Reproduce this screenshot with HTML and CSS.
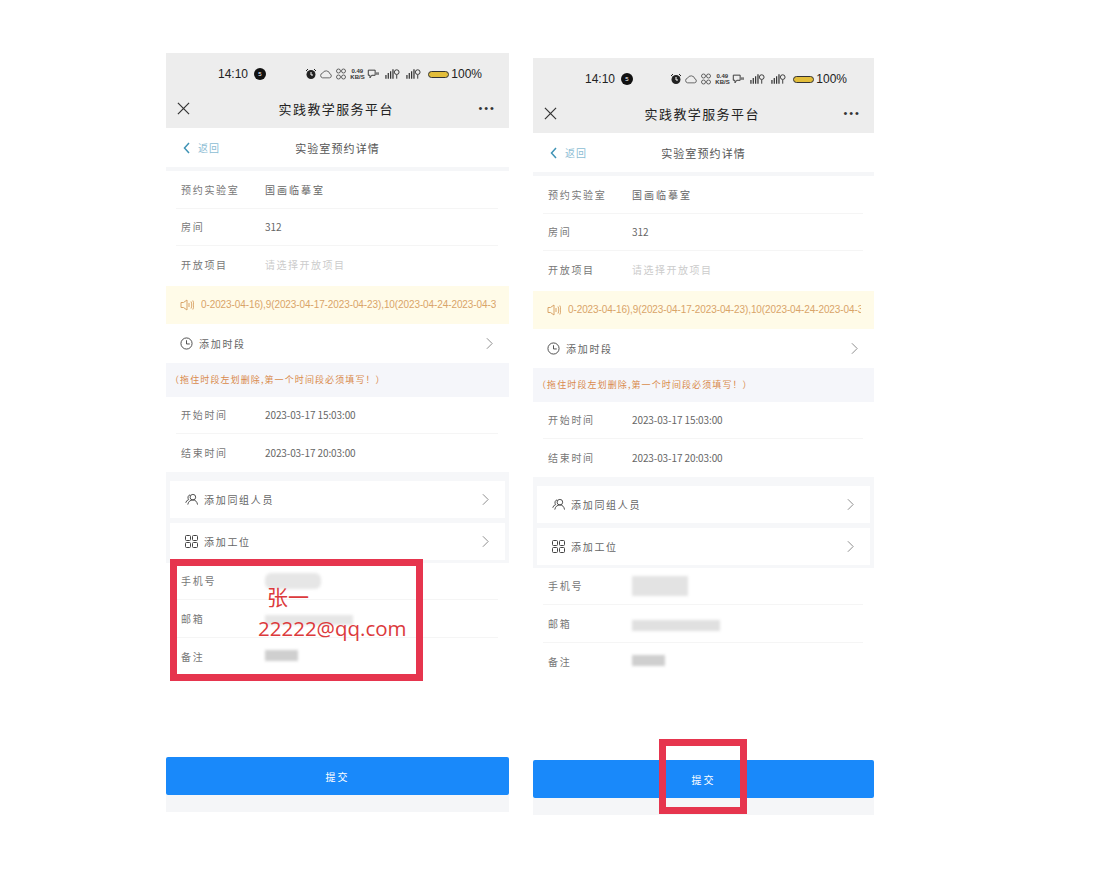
FILE: index.html
```html
<!DOCTYPE html>
<html lang="zh-CN">
<head>
  <meta charset="UTF-8" />
  <meta name="viewport" content="width=device-width, initial-scale=1.0" />
  <title>实验室预约详情</title>
  <link rel="stylesheet" href="styles.css">
</head>
<body>
  <svg class="defs" width="0" height="0" aria-hidden="true">
    <symbol id="i-alarm" viewBox="0 0 12 12"><path d="M1 3 3 1M11 3 9 1" stroke="#222" fill="none"/><circle cx="6" cy="6.5" r="4.5" fill="#222"/><path d="M6 4v3h2" stroke="#fff" fill="none"/></symbol>
    <symbol id="i-cloud" viewBox="0 0 14 12"><path d="M3 10.5h8a2.4 2.4 0 0 0 .5-4.7A4.5 4.5 0 0 0 3 5a2.8 2.8 0 0 0 0 5.500z" fill="none" stroke="#444" stroke-width=".9"/></symbol>
    <symbol id="i-hub" viewBox="0 0 12 12"><g fill="none" stroke="#555" stroke-width=".9"><circle cx="3.500" cy="3" r="2"/><circle cx="8.500" cy="3" r="2"/><circle cx="3.500" cy="9" r="2"/><circle cx="8.500" cy="9" r="2"/></g></symbol>
    <symbol id="i-wifi" viewBox="0 0 14 12"><path d="M1.500 1.500h8v6h-4l-2 3v-3h-2zM11.500 4v3M13 4v3" fill="none" stroke="#333" stroke-width="1.100"/></symbol>
    <symbol id="i-signal" viewBox="0 0 16 12"><path d="M1 11V7M3.500 11V5M6 11V3M8.500 11V1" stroke="#333" stroke-width="1.300"/><circle cx="12.500" cy="4" r="2.500" fill="none" stroke="#333"/><path d="M12.500 7v4" stroke="#333"/></symbol>
    <symbol id="i-close" viewBox="0 0 14 14"><path d="M1 1 13 13M13 1 1 13" stroke="#333" stroke-width="1.300" fill="none"/></symbol>
    <symbol id="i-back" viewBox="0 0 7 12"><path d="M6 1 1.500 6 6 11" stroke="#3f93b5" stroke-width="1.500" fill="none"/></symbol>
    <symbol id="i-next" viewBox="0 0 8 14"><path d="M1 1 7 7 1 13" stroke="#8a8a8a" stroke-width="1.100" fill="none"/></symbol>
    <symbol id="i-sound" viewBox="0 0 14 12"><path d="M1 3.500h2.500L7 1v10L3.500 8.500H1zM9 4v4M11 2.500c1 2 1 5 0 7M12.800 1.500c1.300 2.500 1.300 6.500 0 9" fill="none" stroke="#d9a468"/></symbol>
    <symbol id="i-clock" viewBox="0 0 14 14"><circle cx="7" cy="7" r="6" fill="none" stroke="#444"/><path d="M7 3.500V7.500H10.500" fill="none" stroke="#444"/></symbol>
    <symbol id="i-group" viewBox="0 0 14 13"><g fill="none" stroke="#444"><circle cx="8.500" cy="4" r="3"/><path d="M3 12c.5-3 2.500-5 5.500-5s4.500 2 5 5M5.500 1.500A3 3 0 0 0 4 6.500 5 5 0 0 0 .8 10"/></g></symbol>
    <symbol id="i-grid" viewBox="0 0 13 13"><g fill="none" stroke="#444"><rect x=".5" y=".5" width="5" height="5" rx="1"/><rect x="7.500" y=".5" width="5" height="5" rx="1"/><rect x=".5" y="7.500" width="5" height="5" rx="1"/><rect x="7.500" y="7.500" width="5" height="5" rx="1"/></g></symbol>
  </svg>

  <div class="screens">
    <!-- 左图 -->
    <div class="phone phone-left">
      <div class="top">
        <div class="status">
          <span class="time">14:10</span><span class="dot">5</span>
          <span class="status-icons">
            <svg class="ic-s"><use href="#i-alarm"/></svg>
            <svg class="ic-s"><use href="#i-cloud"/></svg>
            <svg class="ic-s"><use href="#i-hub"/></svg>
            <span class="speed">0.49<br>KB/S</span>
            <svg class="ic-s"><use href="#i-wifi"/></svg>
            <svg class="ic-m"><use href="#i-signal"/></svg>
            <svg class="ic-m"><use href="#i-signal"/></svg>
            <span class="battery"></span>
            <span class="percent">100%</span>
          </span>
        </div>
        <div class="nav">
          <svg class="nav-close"><use href="#i-close"/></svg>
          <span class="nav-title">实践教学服务平台</span>
          <span class="nav-more">•••</span>
        </div>
      </div>
      <div class="sub">
        <span class="back"><svg class="back-ic"><use href="#i-back"/></svg>返回</span>
        <span class="sub-title">实验室预约详情</span>
      </div>
      <div class="group group-top">
        <div class="row"><span class="label">预约实验室</span><span class="value value-cn">国画临摹室</span></div>
        <div class="row"><span class="label">房间</span><span class="value">312</span></div>
        <div class="row"><span class="label">开放项目</span><span class="value muted">请选择开放项目</span></div>
      </div>
      <div class="notice"><svg class="ic-sound"><use href="#i-sound"/></svg><span class="notice-text">0-2023-04-16),9(2023-04-17-2023-04-23),10(2023-04-24-2023-04-3</span></div>
      <div class="link"><svg class="ic-l"><use href="#i-clock"/></svg><span class="link-text">添加时段</span><svg class="next"><use href="#i-next"/></svg></div>
      <div class="hint">（拖住时段左划删除,第一个时间段必须填写！）</div>
      <div class="group">
        <div class="row"><span class="label">开始时间</span><span class="value">2023-03-17 15:03:00</span></div>
        <div class="row"><span class="label">结束时间</span><span class="value">2023-03-17 20:03:00</span></div>
      </div>
      <div class="cards">
        <div class="card"><svg class="ic-l"><use href="#i-group"/></svg><span class="link-text">添加同组人员</span><svg class="next"><use href="#i-next"/></svg></div>
        <div class="card"><svg class="ic-l"><use href="#i-grid"/></svg><span class="link-text">添加工位</span><svg class="next"><use href="#i-next"/></svg></div>
      </div>
      <div class="group">
        <div class="row"><span class="label">手机号</span><span class="smear smear-phone-l"></span></div>
        <div class="row"><span class="label">邮箱</span><span class="smear smear-mail-l"></span></div>
        <div class="row"><span class="label">备注</span><span class="smear smear-note"></span></div>
      </div>
      <button class="submit">提交</button>
      <div class="foot"></div>
      <div class="mark mark-form">
        <span class="mark-name">张一</span>
        <span class="mark-mail">22222@qq.com</span>
      </div>
    </div>

    <!-- 右图 -->
    <div class="phone phone-right">
      <div class="top">
        <div class="status">
          <span class="time">14:10</span><span class="dot">5</span>
          <span class="status-icons">
            <svg class="ic-s"><use href="#i-alarm"/></svg>
            <svg class="ic-s"><use href="#i-cloud"/></svg>
            <svg class="ic-s"><use href="#i-hub"/></svg>
            <span class="speed">0.49<br>KB/S</span>
            <svg class="ic-s"><use href="#i-wifi"/></svg>
            <svg class="ic-m"><use href="#i-signal"/></svg>
            <svg class="ic-m"><use href="#i-signal"/></svg>
            <span class="battery"></span>
            <span class="percent">100%</span>
          </span>
        </div>
        <div class="nav">
          <svg class="nav-close"><use href="#i-close"/></svg>
          <span class="nav-title">实践教学服务平台</span>
          <span class="nav-more">•••</span>
        </div>
      </div>
      <div class="sub">
        <span class="back"><svg class="back-ic"><use href="#i-back"/></svg>返回</span>
        <span class="sub-title">实验室预约详情</span>
      </div>
      <div class="group group-top">
        <div class="row"><span class="label">预约实验室</span><span class="value value-cn">国画临摹室</span></div>
        <div class="row"><span class="label">房间</span><span class="value">312</span></div>
        <div class="row"><span class="label">开放项目</span><span class="value muted">请选择开放项目</span></div>
      </div>
      <div class="notice"><svg class="ic-sound"><use href="#i-sound"/></svg><span class="notice-text">0-2023-04-16),9(2023-04-17-2023-04-23),10(2023-04-24-2023-04-3</span></div>
      <div class="link"><svg class="ic-l"><use href="#i-clock"/></svg><span class="link-text">添加时段</span><svg class="next"><use href="#i-next"/></svg></div>
      <div class="hint">（拖住时段左划删除,第一个时间段必须填写！）</div>
      <div class="group">
        <div class="row"><span class="label">开始时间</span><span class="value">2023-03-17 15:03:00</span></div>
        <div class="row"><span class="label">结束时间</span><span class="value">2023-03-17 20:03:00</span></div>
      </div>
      <div class="cards">
        <div class="card"><svg class="ic-l"><use href="#i-group"/></svg><span class="link-text">添加同组人员</span><svg class="next"><use href="#i-next"/></svg></div>
        <div class="card"><svg class="ic-l"><use href="#i-grid"/></svg><span class="link-text">添加工位</span><svg class="next"><use href="#i-next"/></svg></div>
      </div>
      <div class="group">
        <div class="row"><span class="label">手机号</span><span class="smear smear-phone-r"></span></div>
        <div class="row"><span class="label">邮箱</span><span class="smear smear-mail-r"></span></div>
        <div class="row"><span class="label">备注</span><span class="smear smear-note"></span></div>
      </div>
      <button class="submit">提交</button>
      <div class="foot"></div>
      <div class="mark mark-submit"></div>
    </div>
  </div>
</body>
</html>
```

FILE: styles.css
```css
* {
  box-sizing: border-box;
}
body {
  margin: 0;
  background-color: #ffffff;
  font-family: "Noto Sans CJK SC", "Liberation Sans", sans-serif;
  color: #666;
}
.defs {
  position: absolute;
}
.screens {
  display: flex;
  align-items: flex-start;
  gap: 24px;
  padding: 53px 0 0 166px;
}
.phone {
  position: relative;
  display: flex;
  flex-direction: column;
  background-color: #ffffff;
}
.phone-left {
  width: 343px;
  height: 759px;
}
.phone-right {
  width: 341px;
  height: 757px;
  margin-top: 5px;
}

/* status + nav */
.top {
  height: 75px;
  padding-top: 11px;
  background-color: #ededed;
}
.status {
  display: flex;
  align-items: center;
  height: 20px;
  padding: 0 27px 0 52px;
  color: #222;
  font-family: "Liberation Sans", sans-serif;
  font-size: 12px;
}
.dot {
  width: 12px;
  height: 12px;
  margin-left: 6px;
  border-radius: 50%;
  background-color: #111;
  color: #fff;
  font-size: 6px;
  line-height: 12px;
  text-align: center;
}
.status-icons {
  display: flex;
  align-items: center;
  gap: 3px;
  margin-left: auto;
}
.ic-s {
  width: 12px;
  height: 12px;
}
.ic-m {
  width: 15px;
  height: 12px;
  margin-left: 3px;
}
.speed {
  width: 14px;
  color: #333;
  font-size: 6px;
  font-weight: bold;
  line-height: 6px;
  text-align: center;
}
.battery {
  width: 21px;
  height: 7px;
  margin-left: 4px;
  border: 1px solid #333;
  border-radius: 4px;
  background-color: #e2bd3a;
}
.percent {
  margin-left: -1px;
}
.nav {
  display: flex;
  align-items: center;
  justify-content: space-between;
  height: 40px;
  margin-top: 4px;
  padding: 0 13px 0 11px;
}
.nav-close {
  width: 13px;
  height: 13px;
}
.nav-title {
  padding-left: 4px;
  color: #222;
  font-size: 13px;
  letter-spacing: 1.400px;
}
.nav-more {
  color: #333;
  font-family: "Liberation Sans", sans-serif;
  font-size: 11px;
  letter-spacing: 2px;
}

/* sub header */
.sub {
  position: relative;
  display: flex;
  align-items: center;
  justify-content: center;
  height: 43px;
  border-bottom: 4px solid #f5f6f8;
  color: #555;
  font-size: 11px;
  letter-spacing: 1.100px;
}
.back {
  position: absolute;
  left: 17px;
  display: flex;
  align-items: center;
  gap: 8px;
  color: #8dbdd4;
  font-size: 10px;
}
.back-ic {
  width: 7px;
  height: 12px;
}

/* rows */
.group {
  display: flex;
  flex-direction: column;
}
.row {
  display: flex;
  align-items: center;
  height: 37.500px;
  margin: 0 11px 0 10px;
  padding-left: 5px;
  border-bottom: 1px solid #f5f5f5;
}
.row:last-child {
  border-bottom: none;
}
.label {
  width: 84px;
  color: #777;
  font-size: 10px;
  letter-spacing: 1.700px;
}
.value {
  color: #666;
  font-size: 10px;
  letter-spacing: -.1px;
}
.value-cn {
  letter-spacing: 2px;
}
.muted {
  color: #ccc;
  letter-spacing: 1.500px;
}
.notice {
  display: flex;
  align-items: center;
  height: 38px;
  margin-top: 2px;
  padding: 0 13px 0 14px;
  background-color: #fffbe8;
}
.ic-sound {
  flex: none;
  width: 14px;
  height: 12px;
  margin-right: 7px;
}
.notice-text {
  overflow: hidden;
  color: #d9a468;
  font-family: "Liberation Sans", sans-serif;
  font-size: 10px;
  letter-spacing: -.1px;
  white-space: nowrap;
}
.link {
  display: flex;
  align-items: center;
  height: 39px;
  padding: 0 16px 0 14px;
}
.ic-l {
  flex: none;
  width: 13px;
  height: 13px;
  margin-right: 6px;
}
.link-text {
  color: #666;
  font-size: 10px;
  letter-spacing: 1.700px;
}
.next {
  width: 7px;
  height: 13px;
  margin-left: auto;
}
.hint {
  display: flex;
  align-items: center;
  height: 34px;
  padding-left: 4px;
  background-color: #f5f6fa;
  color: #d98a4c;
  font-size: 9px;
  letter-spacing: 1.100px;
  white-space: nowrap;
}
.cards {
  display: flex;
  flex-direction: column;
  gap: 5px;
  padding: 9px 4px 3px;
  background-color: #f6f7f9;
}
.card {
  display: flex;
  align-items: center;
  height: 37px;
  padding: 0 16px 0 15px;
  background-color: #ffffff;
}

/* 打码区域 */
.smear {
  display: block;
  background-color: #d4d4d4;
  filter: blur(1.500px);
}
.smear-phone-l {
  width: 56px;
  height: 16px;
  border-radius: 6px;
  background-color: #e6e6e6;
}
.smear-mail-l {
  width: 88px;
  height: 10px;
  margin-top: 4px;
  background-color: #e6e6e6;
}
.smear-phone-r {
  width: 56px;
  height: 20px;
  background-color: #e3e3e3;
}
.smear-mail-r {
  width: 88px;
  height: 11px;
  margin-top: 4px;
  background-color: #e0e0e0;
}
.smear-note {
  width: 33px;
  height: 11px;
  margin-top: -2px;
  background-color: #cfcfcf;
}

/* bottom */
.submit {
  flex: none;
  height: 38px;
  margin-top: auto;
  border: none;
  border-radius: 2px;
  background-color: #1989fa;
  color: #ffffff;
  font-family: inherit;
  font-size: 10px;
  letter-spacing: 2px;
}
.foot {
  flex: none;
  height: 17px;
  background-color: #f5f6f8;
}

/* 红框标注 */
.mark {
  position: absolute;
  border: 7px solid #e6354e;
}
.mark-form {
  top: 506px;
  left: 4px;
  width: 253px;
  height: 122px;
}
.mark-submit {
  top: 681px;
  left: 126px;
  width: 88px;
  height: 75px;
}
.mark-name {
  position: absolute;
  top: 15px;
  left: 90px;
  color: #dc3a3c;
  font-size: 21px;
  line-height: 30px;
}
.mark-mail {
  position: absolute;
  top: 47px;
  left: 81px;
  color: #dc3a3c;
  font-family: "Open Sans", "Liberation Sans", sans-serif;
  font-size: 20.500px;
  line-height: 30px;
  white-space: nowrap;
}
```
